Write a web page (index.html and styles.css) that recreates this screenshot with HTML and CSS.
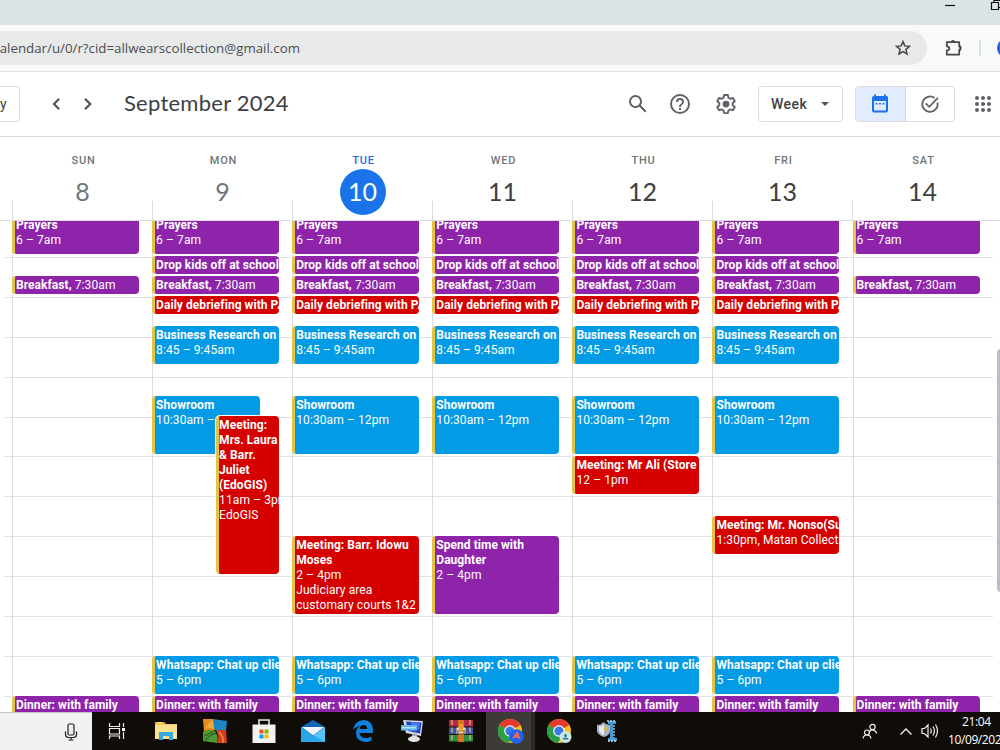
FILE: index.html
```html
<!DOCTYPE html>
<html lang="en">
<head>
<meta charset="utf-8">
<meta name="viewport" content="width=device-width, initial-scale=1.0">
<title>Google Calendar - September 2024</title>
<link rel="stylesheet" href="styles.css">
</head>
<body>
<div class="screen">

  <!-- browser window -->
  <div class="tab-strip">
    <svg width="60" height="25" viewBox="0 0 60 25" fill="none" stroke="#111" stroke-width="1.2">
      <path d="M5 5.500h10"/>
      <path d="M51.500 2.500h7v7h-7zM54 2V.5h8M58.500 7.500h3"/>
    </svg>
  </div>
  <div class="toolbar">
    <div class="address">
      <div class="url">alendar/u/0/r?cid=allwearscollection@gmail.com</div>
      <svg class="star" width="16" height="16" viewBox="0 0 16 16" fill="none" stroke="#444746" stroke-width="1.500"><path d="M8 1.600l1.800 4.300 4.700.4-3.600 3 1.100 4.600L8 11.500l-4 2.400 1.100-4.600-3.600-3 4.700-.4z"/></svg>
    </div>
    <svg class="puzzle" width="18" height="18" viewBox="0 0 18 18"><path d="M1.800 3.200h12.400v4.200h1.200v3.400h-1.200v4.800H1.800v-4.200q2.600-.2 2.600-2T1.800 7.300z" fill="none" stroke="#444746" stroke-width="1.700" stroke-linejoin="round"/><path d="M6 3a2 2 0 0 1 4 0zM14.500 7a2 2 0 0 1 0 4z" fill="#444746"/></svg>
    <span class="divider"></span>
    <span class="avatar"></span>
  </div>

  <!-- calendar header -->
  <header class="header">
    <div class="today">y</div>
    <svg class="arrows" width="44" height="16" viewBox="0 0 44 16" fill="none" stroke="#50545a" stroke-width="2.200"><path d="M9.200 2.800L4 8l5.200 5.200M35 2.800L40.200 8 35 13.200"/></svg>
    <h1 class="month">September 2024</h1>
    <div class="tools">
      <svg width="24" height="24" viewBox="0 0 24 24" fill="#5f6368"><path d="M20.500 19l-5.700-5.700a6.500 6.500 0 1 0-1.500 1.500l5.700 5.700zM5 9.500a4.500 4.500 0 1 1 9 0 4.500 4.500 0 0 1-9 0z"/></svg>
      <svg width="24" height="24" viewBox="0 0 24 24" fill="#5f6368"><path d="M11 18h2v-2h-2v2zm1-16a10 10 0 1 0 0 20 10 10 0 0 0 0-20zm0 18a8 8 0 1 1 0-16 8 8 0 0 1 0 16zm0-14a4 4 0 0 0-4 4h2a2 2 0 1 1 4 0c0 2-3 1.750-3 5h2c0-2.250 3-2.500 3-5a4 4 0 0 0-4-4z"/></svg>
      <svg width="24" height="24" viewBox="0 0 24 24"><path d="M10.100 3h3.800l.5 2.700 1.900 1.100 2.600-.9 1.900 3.300-2.100 1.800v2.200l2.100 1.800-1.900 3.300-2.600-.9-1.900 1.100-.5 2.600h-3.800l-.5-2.600-1.900-1.100-2.600.9L3.200 15l2.100-1.800V11L3.200 9.200l1.900-3.300 2.600.9 1.900-1.100z" fill="none" stroke="#5f6368" stroke-width="1.900" stroke-linejoin="round"/><circle cx="12" cy="12.100" r="3.400" fill="#5f6368"/></svg>
    </div>
    <div class="view-select">Week <span class="caret"></span></div>
    <div class="switch">
      <div class="switch-item selected">
        <svg width="18" height="20" viewBox="0 0 18 20"><path d="M3 2V.5h2V2h8V.5h2V2h.5Q17 2 17 4v12.500q0 2-2 2H3q-2 0-2-2V4q0-2 2-2zM3 7v9.500h12V7z" fill="#1a73e8" fill-rule="evenodd"/><path d="M4.500 9h2v1.600h-2zM8 9h2v1.600H8zM11.500 9h2v1.600h-2z" fill="#1a73e8"/></svg>
      </div>
      <div class="switch-item">
        <svg width="20" height="20" viewBox="0 0 20 20" fill="none" stroke="#5f6368" stroke-width="1.800"><path d="M14.600 4A7.700 7.700 0 1 0 17.500 8.500"/><path d="M5.800 9.300l3.500 3.500 8.600-8.900"/></svg>
      </div>
    </div>
    <svg class="apps" width="18" height="18" viewBox="0 0 18 18" fill="#5f6368"><circle cx="3" cy="3" r="2"/><circle cx="9" cy="3" r="2"/><circle cx="15" cy="3" r="2"/><circle cx="3" cy="9" r="2"/><circle cx="9" cy="9" r="2"/><circle cx="15" cy="9" r="2"/><circle cx="3" cy="15" r="2"/><circle cx="9" cy="15" r="2"/><circle cx="15" cy="15" r="2"/></svg>
  </header>

  <!-- week -->
  <div class="day-names">
    <div class="day past"><span>SUN</span><b>8</b></div>
    <div class="day past"><span>MON</span><b>9</b></div>
    <div class="day current"><span>TUE</span><b>10</b></div>
    <div class="day"><span>WED</span><b>11</b></div>
    <div class="day"><span>THU</span><b>12</b></div>
    <div class="day"><span>FRI</span><b>13</b></div>
    <div class="day"><span>SAT</span><b>14</b></div>
  </div>

  <main class="week">
    <div class="hours">
      <i></i><i></i><i></i><i></i><i></i><i></i><i></i><i></i><i></i><i></i><i></i><i></i><i></i>
    </div>
    <div class="days">
      <div class="column">
        <div class="event purple prayers"><b>Prayers</b><p>6 – 7am</p></div>
        <div class="event purple breakfast"><b>Breakfast,</b> 7:30am</div>
        <div class="event purple dinner"><b>Dinner: with family</b></div>
      </div>
      <div class="column">
        <div class="event purple prayers"><b>Prayers</b><p>6 – 7am</p></div>
        <div class="event purple school"><b>Drop kids off at school</b></div>
        <div class="event purple breakfast"><b>Breakfast,</b> 7:30am</div>
        <div class="event red debrief"><b>Daily debriefing with PA</b></div>
        <div class="event blue research"><b>Business Research on</b><p>8:45 – 9:45am</p></div>
        <div class="event blue showroom narrow"><b>Showroom</b><p>10:30am –</p></div>
        <div class="event red edogis"><b>Meeting:<br>Mrs. Laura<br>&amp; Barr.<br>Juliet<br>(EdoGIS)</b><p>11am – 3pm</p><p>EdoGIS</p></div>
        <div class="event blue whatsapp"><b>Whatsapp: Chat up clients</b><p>5 – 6pm</p></div>
        <div class="event purple dinner"><b>Dinner: with family</b></div>
      </div>
      <div class="column">
        <div class="event purple prayers"><b>Prayers</b><p>6 – 7am</p></div>
        <div class="event purple school"><b>Drop kids off at school</b></div>
        <div class="event purple breakfast"><b>Breakfast,</b> 7:30am</div>
        <div class="event red debrief"><b>Daily debriefing with PA</b></div>
        <div class="event blue research"><b>Business Research on</b><p>8:45 – 9:45am</p></div>
        <div class="event blue showroom"><b>Showroom</b><p>10:30am – 12pm</p></div>
        <div class="event red afternoon"><b>Meeting: Barr. Idowu<br>Moses</b><p>2 – 4pm</p><p>Judiciary area</p><p>customary courts 1&amp;2</p></div>
        <div class="event blue whatsapp"><b>Whatsapp: Chat up clients</b><p>5 – 6pm</p></div>
        <div class="event purple dinner"><b>Dinner: with family</b></div>
      </div>
      <div class="column">
        <div class="event purple prayers"><b>Prayers</b><p>6 – 7am</p></div>
        <div class="event purple school"><b>Drop kids off at school</b></div>
        <div class="event purple breakfast"><b>Breakfast,</b> 7:30am</div>
        <div class="event red debrief"><b>Daily debriefing with PA</b></div>
        <div class="event blue research"><b>Business Research on</b><p>8:45 – 9:45am</p></div>
        <div class="event blue showroom"><b>Showroom</b><p>10:30am – 12pm</p></div>
        <div class="event purple afternoon"><b>Spend time with<br>Daughter</b><p>2 – 4pm</p></div>
        <div class="event blue whatsapp"><b>Whatsapp: Chat up clients</b><p>5 – 6pm</p></div>
        <div class="event purple dinner"><b>Dinner: with family</b></div>
      </div>
      <div class="column">
        <div class="event purple prayers"><b>Prayers</b><p>6 – 7am</p></div>
        <div class="event purple school"><b>Drop kids off at school</b></div>
        <div class="event purple breakfast"><b>Breakfast,</b> 7:30am</div>
        <div class="event red debrief"><b>Daily debriefing with PA</b></div>
        <div class="event blue research"><b>Business Research on</b><p>8:45 – 9:45am</p></div>
        <div class="event blue showroom"><b>Showroom</b><p>10:30am – 12pm</p></div>
        <div class="event red store"><b>Meeting: Mr Ali (Store</b><p>12 – 1pm</p></div>
        <div class="event blue whatsapp"><b>Whatsapp: Chat up clients</b><p>5 – 6pm</p></div>
        <div class="event purple dinner"><b>Dinner: with family</b></div>
      </div>
      <div class="column">
        <div class="event purple prayers"><b>Prayers</b><p>6 – 7am</p></div>
        <div class="event purple school"><b>Drop kids off at school</b></div>
        <div class="event purple breakfast"><b>Breakfast,</b> 7:30am</div>
        <div class="event red debrief"><b>Daily debriefing with PA</b></div>
        <div class="event blue research"><b>Business Research on</b><p>8:45 – 9:45am</p></div>
        <div class="event blue showroom"><b>Showroom</b><p>10:30am – 12pm</p></div>
        <div class="event red nonso"><b>Meeting: Mr. Nonso(Su</b><p>1:30pm, Matan Collection</p></div>
        <div class="event blue whatsapp"><b>Whatsapp: Chat up clients</b><p>5 – 6pm</p></div>
        <div class="event purple dinner"><b>Dinner: with family</b></div>
      </div>
      <div class="column">
        <div class="event purple prayers"><b>Prayers</b><p>6 – 7am</p></div>
        <div class="event purple breakfast"><b>Breakfast,</b> 7:30am</div>
        <div class="event purple dinner"><b>Dinner: with family</b></div>
      </div>
    </div>
    <div class="scrollbar"></div>
  </main>

  <!-- windows taskbar -->
  <footer class="taskbar">
    <div class="search">
      <svg width="14" height="18" viewBox="0 0 14 18" fill="none" stroke="#222" stroke-width="1.200"><rect x="4" y="1" width="6" height="11" rx="1.500"/><path d="M1.500 8.500v3q0 3 3 3h5q3 0 3-3v-3M7 14.500v2.500M4.500 17h5"/></svg>
    </div>
    <div class="task">
      <svg width="18" height="18" viewBox="0 0 18 18" fill="none" stroke="#eee" stroke-width="1.200"><path d="M1.500 1v3.500h10V1M1.500 17v-3h10v3M1.500 6.500h10v5.500h-10zM15.500 1v4M15.500 10v7"/><path d="M14 6h3v3h-3z" fill="#fff" stroke="none"/></svg>
    </div>
    <div class="task">
      <svg width="24" height="24" viewBox="0 0 24 24"><path d="M1 3h9l2 2h11v15H1z" fill="#eeb72f"/><path d="M1 5.500h22V20H1z" fill="#fbe08f"/><path d="M5 21v-8h14v8h-4v-4H9v4z" fill="#36a9e4"/><path d="M3 3.800h5" stroke="#fff3b0"/></svg>
    </div>
    <div class="task">
      <svg width="26" height="26" viewBox="0 0 26 26"><path d="M1 1h11l1 11-11 2z" fill="#e88a1e"/><path d="M11 1l14 2-1 9-10 1q-4-5-3-12z" fill="#1b87c4"/><path d="M14 12l10 0 1 13H15q3-6-1-13z" fill="#d43c20"/><path d="M1 14q6-4 12-1 4 6 2 12L1 23z" fill="#4d9a34"/><path d="M3 11q3-7 8-9l1 9q-5-3-9 0z" fill="#efac3b"/><path d="M3 22q6-6 11-7M2 18l9-4" stroke="#234f19" stroke-width="1" fill="none"/><path d="M17 14q5 5 4 11" stroke="#f07b35" stroke-width="2" fill="none"/></svg>
    </div>
    <div class="task">
      <svg width="26" height="26" viewBox="0 0 26 26"><path d="M8 7V2h10v5" fill="none" stroke="#e8e8e8" stroke-width="1.600"/><path d="M1.500 6.500h23V25h-23z" fill="#f2f2f2"/><path d="M8.500 11.500h4v4h-4z" fill="#f25022"/><path d="M13.500 11.500h4v4h-4z" fill="#7fba00"/><path d="M8.500 16.500h4v4h-4z" fill="#00a4ef"/><path d="M13.500 16.500h4v4h-4z" fill="#ffb900"/></svg>
    </div>
    <div class="task">
      <svg width="26" height="24" viewBox="0 0 26 24"><path d="M1 8l12-7 12 7v15H1z" fill="#0f68b5"/><path d="M1 8l12 9 12-9v15H1z" fill="#28a8ea"/><path d="M2 8h22L13 16.500z" fill="#f3f6f8"/><path d="M13 16l12-8v15z" fill="#55c5f5"/></svg>
    </div>
    <div class="task">
      <svg width="24" height="24" viewBox="0 0 24 24"><path d="M2 11Q4 1 13 1q9 1 9 10v3H8.500q.5 5 6 5 3.500 0 6-1.500v4.300Q17.500 23 14 23q-9-1-9-9 0-5 4.500-7Q4.500 7.500 2 11zm6.600-1h7.600q0-4-3.700-4-3.300 0-3.900 4z" fill="#0f80dc"/></svg>
    </div>
    <div class="task">
      <svg width="24" height="24" viewBox="0 0 24 24"><path d="M3 1l20 1-2 15-15-3z" fill="#d6dce4"/><path d="M6 2.500l15.500 1-1.500 11L8 12z" fill="#253fc4"/><path d="M11 3l9 .5-1 7-8 1z" fill="#4a72e8"/><path d="M1 6h16v5.500H1z" fill="#62b4e8"/><path d="M2 8.800h14" stroke="#e3f4ff"/><path d="M12 14l5 1v4h-5z" fill="#a6acb3"/><ellipse cx="14" cy="20" rx="6" ry="3" fill="#e1e3e6"/></svg>
    </div>
    <div class="task">
      <svg width="26" height="24" viewBox="0 0 26 24"><path d="M1 1h24v6.500H1z" fill="#b3284c"/><path d="M1 8.500h24V15H1z" fill="#3d55ad"/><path d="M1 16h24v6.500H1z" fill="#2a8f42"/><path d="M4 1v21.500M22 1v21.500" stroke="#d8b257" stroke-width="1.400" stroke-dasharray="5 2.500"/><path d="M10 1h6v22h-6z" fill="#d97324"/><path d="M8.500 8.500h9V15h-9z" fill="#e9dcc6"/><path d="M11 5h4v8h-4z" fill="#f09a24"/><path d="M10 11v4h6v-4" fill="none" stroke="#6d3b1d"/></svg>
    </div>
    <div class="task active">
      <svg width="28" height="26" viewBox="0 0 28 26"><circle cx="13" cy="13" r="12" fill="#fbc116"/><path d="M13 13L2.600 7a12 12 0 0 1 20.800 0z" fill="#e33b2e"/><path d="M13 13L2.600 7A12 12 0 0 0 12 25l4.500-8z" fill="#2a9f48"/><circle cx="13" cy="13" r="5.800" fill="#fff"/><circle cx="13" cy="13" r="4.600" fill="#3b78e7"/><circle cx="19.500" cy="18.500" r="7.300" fill="#1f62ec"/><path d="M20.500 12.500l3 9-4-2-4.500 1z" fill="#f0685b"/></svg>
    </div>
    <div class="task">
      <svg width="28" height="26" viewBox="0 0 28 26"><circle cx="13" cy="13" r="12" fill="#fbc116"/><path d="M13 13L2.600 7a12 12 0 0 1 20.800 0z" fill="#e33b2e"/><path d="M13 13L2.600 7A12 12 0 0 0 12 25l4.500-8z" fill="#2a9f48"/><circle cx="13" cy="13" r="5.800" fill="#fff"/><circle cx="13" cy="13" r="4.600" fill="#3b78e7"/><circle cx="19.500" cy="19" r="6" fill="#c9e6ea"/><circle cx="19.500" cy="17.500" r="1.500" fill="#3f7682"/><path d="M16.500 21.500q0-2 3-2t3 2z" fill="#3f7682"/></svg>
    </div>
    <div class="task">
      <svg width="26" height="24" viewBox="0 0 26 24"><path d="M13 2h8v3h-3v14h4v3h-9v-3h2V5h-2z" fill="#4799d3"/><path d="M12 2h8M13 22h9M19 6v13" stroke="#b9dbf0" stroke-width="1.300" stroke-dasharray="2 1"/><path d="M2 6q5 0 6-3 3 3 7 3v6q0 4-6 6-6-2-7-6z" fill="#aab4c1"/><path d="M4 7.500q3 0 5-2v10.500q-4-1-5-5z" fill="#e6e9ed"/><path d="M9 8h4v4H9z" fill="#d4b55d"/></svg>
    </div>
    <div class="tray">
      <svg width="16" height="17" viewBox="0 0 16 17" fill="none" stroke="#f2f2f2" stroke-width="1.200"><circle cx="10.500" cy="4" r="2.700"/><path d="M7 9.500q1-2.700 3.500-2.700T15 10.500"/><circle cx="5" cy="9.500" r="2.500"/><path d="M1 15.500q.5-3.500 4-3.500t4 3.500"/></svg>
      <svg width="14" height="9" viewBox="0 0 14 9" fill="none" stroke="#f2f2f2" stroke-width="1.400"><path d="M1.500 7.500L7 2l5.500 5.500"/></svg>
      <svg width="18" height="16" viewBox="0 0 18 16" fill="none" stroke="#f2f2f2" stroke-width="1.200"><path d="M1 5.500h2.500L7 2v12l-3.500-3.500H1zM9.500 5.500q1.500 2.500 0 5M12 3.500q2.800 4.500 0 9M14.500 1.500q4 6.500 0 13"/></svg>
      <div class="clock"><span>21:04</span><span>10/09/202</span></div>
    </div>
  </footer>
</div>
</body>
</html>
```

FILE: styles.css
```css
* {
  box-sizing: border-box;
}

body {
  margin: 0;
  background: #fff;
  font-family: Roboto, sans-serif;
  color: #3c4043;
}

svg {
  display: block;
  flex: none;
}

.screen {
  width: 1000px;
  height: 750px;
  display: flex;
  flex-direction: column;
  overflow: hidden;
}

/* browser window */
.tab-strip {
  height: 25px;
  flex: none;
  display: flex;
  justify-content: flex-end;
  background: #dae3e6;
}

.toolbar {
  height: 47px;
  flex: none;
  display: flex;
  align-items: center;
  background: #f9f9f9;
  border-bottom: 1px solid #dfe0e1;
}

.address {
  width: 927px;
  height: 34px;
  flex: none;
  display: flex;
  align-items: center;
  justify-content: space-between;
  padding-right: 16px;
  background: #e8eaea;
  border-radius: 0 17px 17px 0;
}

.url {
  width: 300px;
  display: flex;
  justify-content: flex-end;
  font-family: "Open Sans", sans-serif;
  font-size: 13.3px;
  white-space: nowrap;
  color: #4b4d50;
}

.puzzle {
  margin-left: 18px;
}

.divider {
  width: 2px;
  height: 16px;
  flex: none;
  margin-left: 16px;
  background: #cfe3e9;
}

.avatar {
  width: 20px;
  height: 20px;
  flex: none;
  margin-left: 16px;
  border-radius: 50%;
  background: #1b66f0;
}

/* calendar header */
.header {
  height: 65px;
  flex: none;
  display: flex;
  align-items: center;
  border-bottom: 1px solid #dadce0;
  overflow: hidden;
}

.today {
  width: 20px;
  height: 36px;
  flex: none;
  border: 1px solid #dadce0;
  border-left: none;
  border-radius: 0 4px 4px 0;
  font-size: 14px;
  line-height: 34px;
}

.arrows {
  margin-left: 30px;
}

.month {
  width: 504px;
  flex: none;
  margin: 0 0 2px 30px;
  font-family: Lato, sans-serif;
  font-size: 22px;
  font-weight: 400;
  line-height: 28px;
  letter-spacing: 0.25px;
}

.tools {
  width: 132px;
  flex: none;
  display: flex;
  gap: 22px;
  margin-left: -2px;
}

.tools svg:nth-child(2) {
  margin-left: -4px;
}

.view-select {
  width: 85px;
  height: 36px;
  flex: none;
  display: flex;
  align-items: center;
  justify-content: space-between;
  padding: 0 13px 0 12px;
  border: 1px solid #dadce0;
  border-radius: 4px;
  font-size: 14px;
  font-weight: 500;
  letter-spacing: 0.5px;
}

.caret {
  border: 4px solid transparent;
  border-top-color: #50545a;
  border-bottom: none;
}

.switch {
  width: 100px;
  height: 36px;
  flex: none;
  display: flex;
  margin-left: 12px;
  border: 1px solid #dadce0;
  border-radius: 4px;
  overflow: hidden;
}

.switch-item {
  flex: 1;
  display: flex;
  align-items: center;
  justify-content: center;
}

.selected {
  background: #e1edfc;
  border-right: 1px solid #dadce0;
}

.apps {
  margin-left: 19px;
}

/* day names */
.day-names {
  height: 83px;
  flex: none;
  display: flex;
  padding-left: 12px;
}

.day {
  width: 140px;
  flex: none;
  display: flex;
  flex-direction: column;
  align-items: center;
  padding-top: 17px;
  background: linear-gradient(#dadce0, #dadce0) 0 100% / 1px 19px no-repeat;
}

.day span {
  padding-left: 3px;
  font-size: 11px;
  font-weight: 500;
  line-height: 13px;
  letter-spacing: 0.8px;
  color: #70757a;
}

.day b {
  width: 46px;
  height: 46px;
  margin: 2px 0 0 1px;
  border-radius: 50%;
  font-family: Lato, sans-serif;
  font-size: 25px;
  font-weight: 400;
  line-height: 44px;
  text-align: center;
}

.past b {
  color: #70757a;
}

.current span {
  color: #1a73e8;
}

.current b {
  background: #1a73e8;
  color: #fff;
}

/* week grid, one row is 15 minutes and the first one is 6am */
.week {
  height: 492px;
  flex: none;
  position: relative;
  display: grid;
  border-top: 1px solid #dadce0;
  overflow: hidden;
}

.hours,
.days {
  grid-area: 1 / 1;
  margin-top: -4.2px;
}

.hours {
  width: 989px;
  margin-left: 4px;
}

.hours i {
  display: block;
  height: 39.95px;
  border-top: 1px solid #dfe1e4;
}

.days {
  display: flex;
  margin-top: -4.6px;
  padding-left: 12px;
}

.column {
  width: 140.1px;
  flex: none;
  display: grid;
  grid-template-columns: 127px;
  grid-template-rows: repeat(52, 9.9875px);
  background: linear-gradient(#dadce0, #dadce0) 0 0 / 1px 100% no-repeat;
}

.event {
  min-width: 0;
  grid-column: 1;
  margin-bottom: 2px;
  padding: 2px 0 0 1px;
  border-left: 3px solid #e4c441;
  border-radius: 4px;
  font-size: 12px;
  line-height: 15px;
  letter-spacing: 0.1px;
  white-space: nowrap;
  color: #fff;
  overflow: hidden;
}

.event b {
  letter-spacing: 0.05px;
}

.event p {
  margin: 0;
}

.purple { background: #8e24aa; }
.red { background: #d50000; }
.blue { background: #039be5; }

.prayers { grid-row: 1 / span 4; }
.school { grid-row: 5 / span 2; }
.breakfast { grid-row: 7 / span 2; }
.debrief { grid-row: 9 / span 2; }
.research { grid-row: 12 / span 4; }
.showroom { grid-row: 19 / span 6; }
.edogis { grid-row: 21 / span 16; }
.store { grid-row: 25 / span 4; }
.nonso { grid-row: 31 / span 4; }
.afternoon { grid-row: 33 / span 8; }
.whatsapp { grid-row: 45 / span 4; }
.dinner { grid-row: 49 / span 4; }

.narrow {
  width: 108px;
}

.edogis {
  margin-left: 64px;
  padding-left: 0;
  box-shadow: 0 0 0 1px #fff;
}

.scrollbar {
  position: absolute;
  top: 128px;
  right: -5px;
  width: 8px;
  height: 243px;
  border-radius: 4px;
  background: #bcbec4;
}

/* taskbar */
.taskbar {
  height: 38px;
  flex: none;
  display: flex;
  background: #100d08;
}

.search {
  width: 92px;
  flex: none;
  display: flex;
  align-items: center;
  justify-content: flex-end;
  padding-right: 14px;
  background: #f1f1f1;
  border-top: 1px solid #c4c4c4;
}

.task {
  width: 49.2px;
  flex: none;
  display: flex;
  align-items: center;
  justify-content: center;
}

.active {
  background: linear-gradient(90deg, #3d3b38 45px, #2c2a27 45px);
}

.task svg[width="28"] {
  margin-left: 2px;
}

.tray {
  flex: 1;
  display: flex;
  align-items: center;
  justify-content: flex-end;
  gap: 21px;
  overflow: hidden;
}

.tray svg:nth-child(3) {
  margin-left: -13px;
}

.clock {
  width: 52px;
  flex: none;
  display: flex;
  flex-direction: column;
  align-items: flex-start;
  margin-left: -12px;
  font-family: "Open Sans", sans-serif;
  font-size: 12px;
  line-height: 18px;
  letter-spacing: -0.4px;
  color: #fff;
}

.clock span:first-child {
  padding-left: 14px;
}
```
